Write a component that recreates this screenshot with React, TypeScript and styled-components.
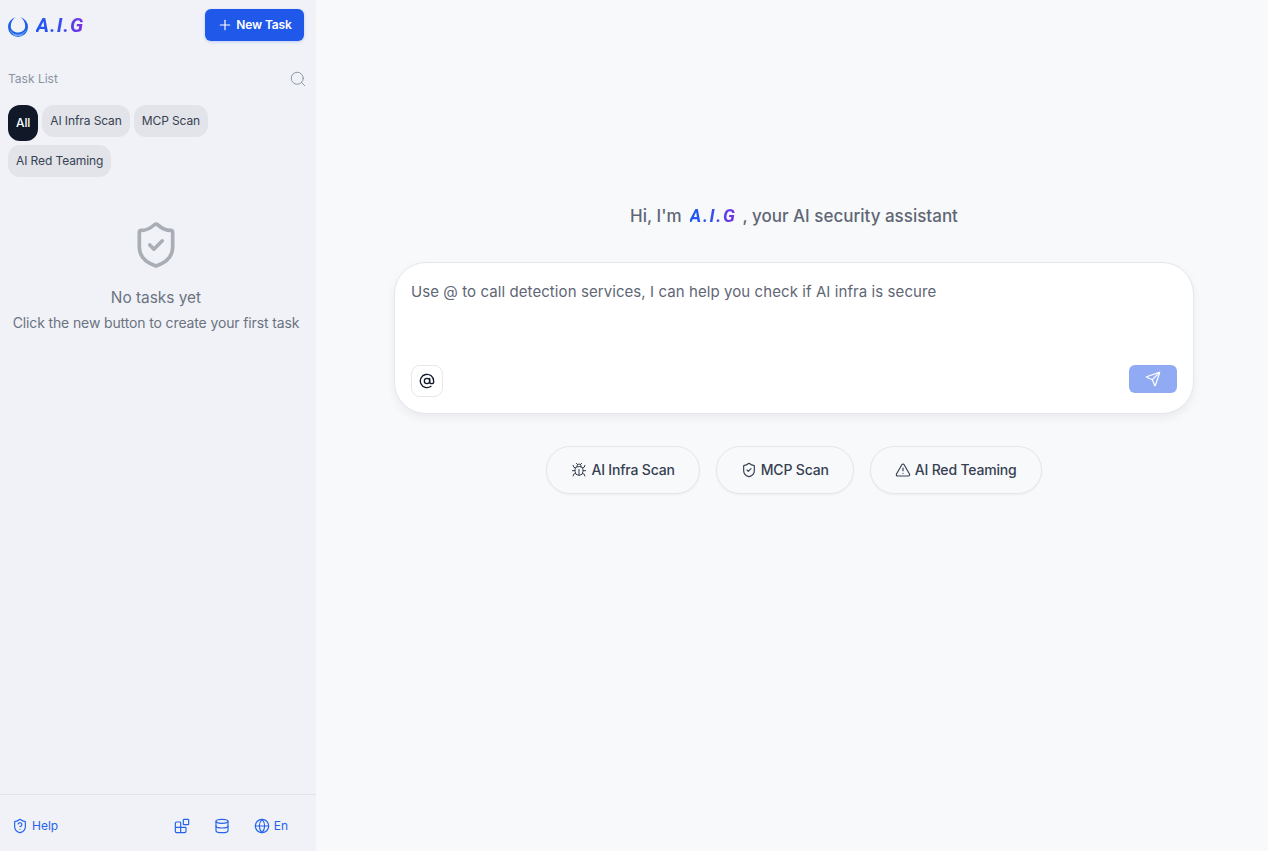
import React from 'react';
import styled, { createGlobalStyle } from 'styled-components';
import {
  AtSign,
  Blocks,
  Bug,
  Database,
  Globe,
  Plus,
  Search,
  Send,
  ShieldCheck,
  ShieldQuestion,
  TriangleAlert,
} from 'lucide-react';

const GlobalStyle = createGlobalStyle`
  html, body {
    margin: 0;
    padding: 0;
    height: 100%;
    background: #f8f9fb;
  }
  body {
    font-family: Inter, "Noto Sans", sans-serif;
    color: #1f2937;
    -webkit-font-smoothing: antialiased;
  }
  * { box-sizing: border-box; }
`;

const Page = styled.div`
  display: flex;
  width: 100%;
  height: 851px;
  overflow: hidden;
`;

const Sidebar = styled.aside`
  display: flex;
  flex-direction: column;
  width: 316px;
  flex: none;
  background: #f0f2f7;
`;

const SidebarHeader = styled.div`
  display: flex;
  align-items: center;
  justify-content: space-between;
  padding: 9px 12px 0 8px;
`;

const Brand = styled.div`
  display: flex;
  align-items: center;
  gap: 8px;
`;

const LogoSvg = styled.svg`
  flex: none;
  margin-top: 3px;
`;

const LogoText = styled.span<{ $size: number; $track: number }>`
  font-family: Roboto, "Liberation Sans", sans-serif;
  font-size: ${p => p.$size}px;
  font-weight: 700;
  font-style: italic;
  letter-spacing: ${p => p.$track}px;
  line-height: 1;
  background: linear-gradient(90deg, #1d58f0 0%, #3b4cf0 55%, #7c2fe0 100%);
  -webkit-background-clip: text;
  background-clip: text;
  color: transparent;
`;

const NewTaskButton = styled.button`
  display: flex;
  align-items: center;
  justify-content: center;
  gap: 3px;
  width: 99px;
  height: 32px;
  padding: 0 0 1px;
  border: none;
  border-radius: 6px;
  background: #2058ea;
  box-shadow: 0 1px 3px rgba(32, 88, 234, 0.25);
  color: #fff;
  font-family: inherit;
  font-size: 12px;
  font-weight: 600;
  letter-spacing: -0.15px;
`;

const ListHeader = styled.div`
  display: flex;
  align-items: center;
  justify-content: space-between;
  margin-top: 27px;
  padding: 0 9px 0 8px;
  height: 20px;
  color: #8b93a1;
  font-size: 12px;
`;

const SearchIcon = styled(Search)`
  margin-top: 2px;
`;

const ChipRow = styled.div`
  display: flex;
  flex-wrap: wrap;
  align-items: flex-start;
  gap: 4px;
  margin-top: 17px;
  padding: 0 8px;
  width: 230px;
`;

const Chip = styled.button<{ $active?: boolean }>`
  height: ${p => (p.$active ? 36 : 32)}px;
  padding: 0 8px 1px;
  border: none;
  border-radius: 12px;
  background: ${p => (p.$active ? '#111827' : '#e2e4e9')};
  color: ${p => (p.$active ? '#fff' : '#374151')};
  font-family: inherit;
  font-size: 12px;
  font-weight: ${p => (p.$active ? 500 : 400)};
  letter-spacing: -0.1px;
`;

const EmptyState = styled.div`
  display: flex;
  flex-direction: column;
  align-items: center;
  margin-top: 43px;
  padding-right: 4px;
  color: #a9adb5;
`;

const EmptyTitle = styled.div`
  margin-top: 16px;
  color: #6b7280;
  font-size: 15.4px;
  line-height: 24px;
`;

const EmptyHint = styled.div`
  margin-top: 3px;
  color: #6b7280;
  font-size: 14px;
  letter-spacing: -0.13px;
  line-height: 20px;
`;

const SidebarFooter = styled.div`
  display: flex;
  align-items: center;
  justify-content: space-between;
  height: 57px;
  margin-top: auto;
  padding: 6px 28px 0 12px;
  border-top: 1px solid #e2e4e9;
  color: #2563eb;
  font-size: 12px;
`;

const FooterItem = styled.div`
  display: flex;
  align-items: center;
  gap: 4px;
`;

const FooterLabel = styled.span`
  margin-bottom: 2px;
`;

const FooterIcons = styled.div`
  display: flex;
  align-items: center;
  gap: 24px;
`;

const Main = styled.main`
  display: flex;
  flex: 1;
  flex-direction: column;
  align-items: center;
  padding: 204px 0 0 4px;
`;

const Greeting = styled.h1`
  display: flex;
  align-items: center;
  gap: 8px;
  margin: 0;
  height: 24px;
  color: #5f6675;
  font-size: 17px;
  font-weight: 500;
`;

const GreetingLogo = styled(LogoText)`
  margin-right: -2px;
`;

const InputCard = styled.div`
  display: flex;
  flex-direction: column;
  justify-content: space-between;
  width: 800px;
  height: 152px;
  margin-top: 34px;
  padding: 18px 16px 16px;
  border: 1px solid #e5e7eb;
  border-radius: 32px;
  background: #fff;
  box-shadow: 0 4px 10px rgba(17, 24, 39, 0.06);
`;

const Placeholder = styled.div`
  color: #5f6675;
  font-size: 15px;
  letter-spacing: 0.08px;
  line-height: 22px;
`;

const CardActions = styled.div`
  display: flex;
  align-items: flex-end;
  justify-content: space-between;
`;

const AtButton = styled.button`
  display: flex;
  align-items: center;
  justify-content: center;
  width: 32px;
  height: 32px;
  padding: 0;
  border: 1px solid #e5e7eb;
  border-radius: 9px;
  background: #fff;
  color: #111827;
`;

const SendButton = styled.button`
  display: flex;
  align-items: center;
  justify-content: center;
  width: 48px;
  height: 28px;
  margin-bottom: 4px;
  padding: 0;
  border: none;
  border-radius: 6px;
  background: #90aaf4;
  color: #fff;
`;

const QuickActions = styled.div`
  display: flex;
  gap: 16px;
  margin-top: 32px;
`;

const QuickButton = styled.button`
  display: flex;
  align-items: center;
  gap: 4px;
  height: 48px;
  padding: 0 24px;
  border: 1px solid #e5e7eb;
  border-radius: 24px;
  background: #f8f9fb;
  box-shadow: 0 1px 2px rgba(17, 24, 39, 0.05);
  color: #374151;
  font-family: inherit;
  font-size: 14px;
  font-weight: 500;
  letter-spacing: -0.18px;
`;

const QuickLabel = styled.span`
  margin-bottom: 2px;
`;

const LogoMark = () => (
  <LogoSvg width="20" height="20" viewBox="0 0 20 20">
    <path
      d="M7.800 .3A10 10 0 0 0 0 10 10 10 0 0 0 10 20 10 10 0 0 0 20 10 10 10 0 0 0 12.200 .3C15.500 2 17.200 5.500 17.200 9.500 17.200 13 14 15.500 10 15.500S2.800 13 2.800 9.500C2.800 5.500 4.500 2 7.800 .3Z"
      fill="#1c62e6"
    />
    <path d="M2 13.500C4.500 17 7.500 18 10 18s5.500-1 8-4.500" fill="none" stroke="#a9c8f7" strokeWidth=".7" />
    <path d="M5 17.800c1.500.7 3.200 1 5 1s3.500-.3 5-1" fill="none" stroke="#d5e4fb" strokeWidth=".5" />
  </LogoSvg>
);

const App = () => (
  <>
    <GlobalStyle />
    <Page>
      <Sidebar>
        <SidebarHeader>
          <Brand>
            <LogoMark />
            <LogoText $size={20} $track={1}>A.I.G</LogoText>
          </Brand>
          <NewTaskButton>
            <Plus size={16} strokeWidth={1.75} />
            New Task
          </NewTaskButton>
        </SidebarHeader>
        <ListHeader>
          Task List
          <SearchIcon size={18} strokeWidth={1.25} />
        </ListHeader>
        <ChipRow>
          <Chip $active>All</Chip>
          <Chip>AI Infra Scan</Chip>
          <Chip>MCP Scan</Chip>
          <Chip>AI Red Teaming</Chip>
        </ChipRow>
        <EmptyState>
          <ShieldCheck size={50} strokeWidth={1.75} />
          <EmptyTitle>No tasks yet</EmptyTitle>
          <EmptyHint>Click the new button to create your first task</EmptyHint>
        </EmptyState>
        <SidebarFooter>
          <FooterItem>
            <ShieldQuestion size={16} strokeWidth={1.75} />
            <FooterLabel>Help</FooterLabel>
          </FooterItem>
          <FooterIcons>
            <Blocks size={16} strokeWidth={1.75} />
            <Database size={16} strokeWidth={1.75} />
            <FooterItem>
              <Globe size={16} strokeWidth={1.75} />
              <FooterLabel>En</FooterLabel>
            </FooterItem>
          </FooterIcons>
        </SidebarFooter>
      </Sidebar>
      <Main>
        <Greeting>
          Hi, I'm <GreetingLogo $size={18} $track={1.6}>A.I.G</GreetingLogo> , your AI security assistant
        </Greeting>
        <InputCard>
          <Placeholder>Use @ to call detection services, I can help you check if AI infra is secure</Placeholder>
          <CardActions>
            <AtButton>
              <AtSign size={16} />
            </AtButton>
            <SendButton>
              <Send size={16} strokeWidth={1.75} />
            </SendButton>
          </CardActions>
        </InputCard>
        <QuickActions>
          <QuickButton>
            <Bug size={16} strokeWidth={1.5} />
            <QuickLabel>AI Infra Scan</QuickLabel>
          </QuickButton>
          <QuickButton>
            <ShieldCheck size={16} strokeWidth={1.75} />
            <QuickLabel>MCP Scan</QuickLabel>
          </QuickButton>
          <QuickButton>
            <TriangleAlert size={16} strokeWidth={1.75} />
            <QuickLabel>AI Red Teaming</QuickLabel>
          </QuickButton>
        </QuickActions>
      </Main>
    </Page>
  </>
);

export default App;
